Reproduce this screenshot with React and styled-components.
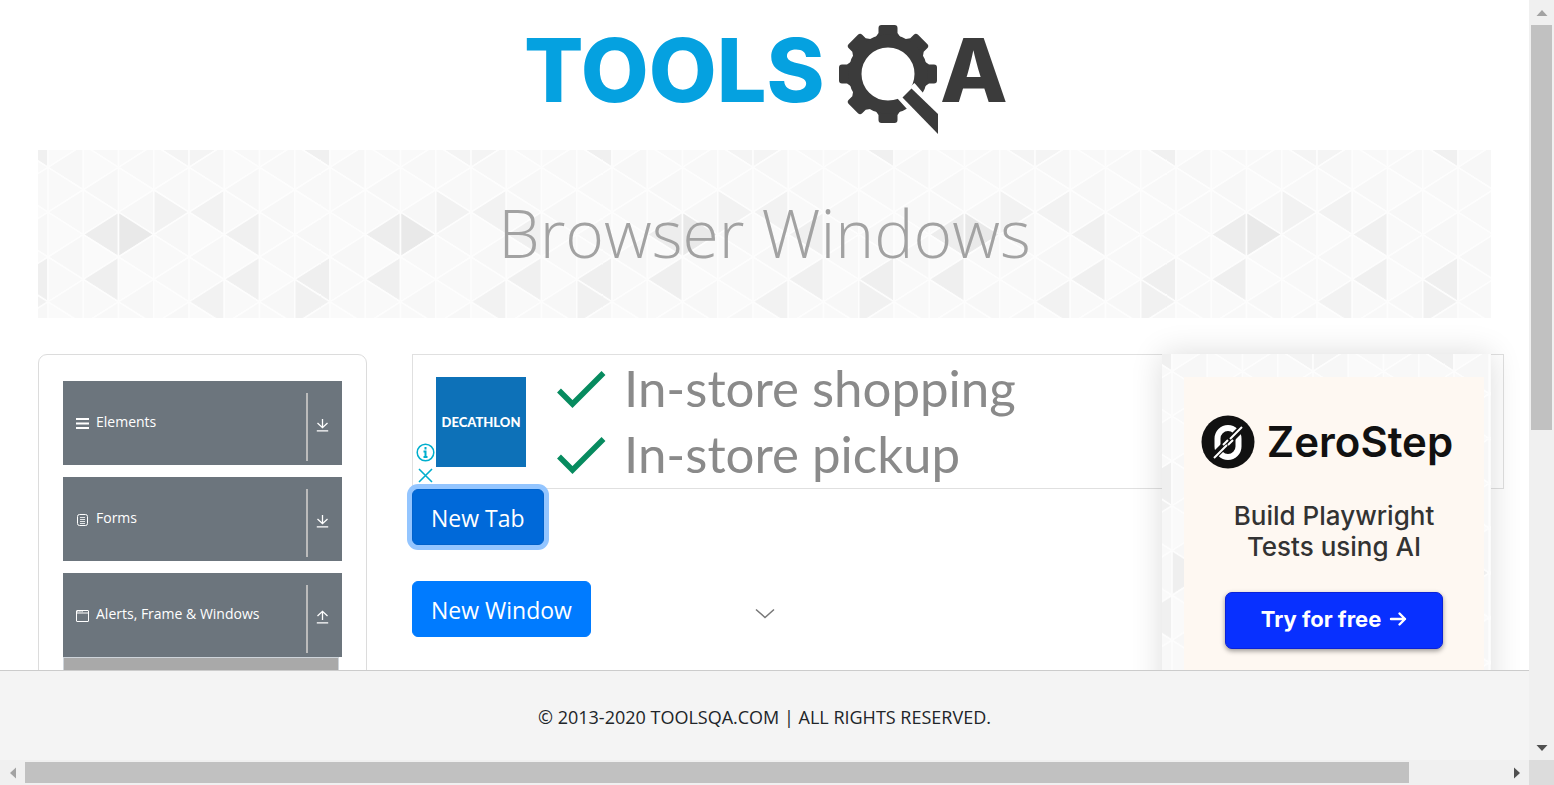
import React from "react";
import styled, { createGlobalStyle } from "styled-components";

const ui = '"Open Sans", "Noto Sans", sans-serif';

const GlobalStyle = createGlobalStyle`
  *, *::before, *::after { box-sizing: border-box; }
  body { margin: 0; background: #fff; color: #212529; font-family: ${ui}; }
  svg { display: block; }
`;

const Shell = styled.div`
  display: grid;
  grid-template-columns: minmax(0, 1fr) 25px;
  grid-template-rows: minmax(0, 1fr) 25px;
  height: 100vh;
`;
const Page = styled.div`
  display: flex;
  flex-direction: column;
  min-height: 0;
`;
const Scroller = styled.div`
  position: relative;
  flex: 1;
  min-height: 0;
  overflow: hidden;
  padding: 0 38px;
`;
const Header = styled.header`
  display: flex;
  justify-content: center;
  height: 150px;
`;
const Banner = styled.div`
  display: grid;
  height: 168px;
  margin-bottom: 36px;
  > * { grid-area: 1 / 1; }
`;
const Title = styled.h1`
  position: relative;
  align-self: center;
  margin: 0;
  padding-bottom: 4px;
  text-align: center;
  font-size: 66px;
  line-height: 84px;
  font-weight: 300;
  color: #a2a2a2;
`;
const Columns = styled.div`
  display: grid;
  grid-template-columns: minmax(0, 329fr) minmax(0, 705fr) minmax(0, 329fr);
  column-gap: 45px;
`;
const Accordion = styled.nav`
  display: flex;
  flex-direction: column;
  gap: 12px;
  height: 600px;
  padding: 26px 24px;
  border: 1px solid #dcdcdc;
  border-radius: 9px;
`;
const GroupButton = styled.button`
  display: flex;
  align-items: center;
  width: 100%;
  height: 84px;
  padding: 0 13px 0 12px;
  border: 0;
  background: #6c757d;
  color: #fff;
  font-family: ${ui};
  font-size: 14px;
  line-height: 20px;
  text-align: left;
`;
const GroupLabel = styled.span`
  flex: 1;
  padding: 0 0 2px 6px;
`;
const GroupToggle = styled.span`
  display: flex;
  align-items: center;
  height: 68px;
  margin-top: 8px;
  padding: 0 0 4px 8px;
  border-left: 2px solid #bbb;
`;
const SubList = styled.div`
  height: 200px;
  margin-right: 3px;
  border: 1px solid #ced4da;
  background: #a9a9a9;
`;
const Main = styled.main`
  min-width: 0;
`;
const AdFrame = styled.section`
  display: flex;
  width: 1092px;
  height: 135px;
  border: 1px solid #e0e0e0;
`;
const AdControls = styled.div`
  display: flex;
  flex-direction: column;
  justify-content: flex-end;
  align-items: center;
  gap: 6px;
  width: 23px;
  padding: 0 0 5px 2px;
`;
const IconButton = styled.button`
  padding: 0;
  border: 0;
  background: none;
`;
const Brand = styled.a`
  display: grid;
  place-items: center;
  width: 90px;
  height: 90px;
  margin-top: 22px;
  background: #0d71b8;
  color: #fff;
  font-family: Lato, sans-serif;
  font-size: 13px;
  font-weight: 900;
  text-decoration: none;
`;
const Perks = styled.ul`
  margin: 0;
  padding: 0 0 0 30px;
  list-style: none;
`;
const Perk = styled.li`
  display: flex;
  align-items: center;
  gap: 18px;
  height: 66px;
  color: #8a8a8a;
  font-family: Lato, sans-serif;
  font-size: 51px;
  line-height: 66px;
`;
const Actions = styled.div`
  display: flex;
  flex-direction: column;
  align-items: flex-start;
  gap: 36px;
`;
const ActionButton = styled.button`
  height: 56px;
  padding: 2px 18px 0;
  border: 1px solid ${(p) => (p.$focused ? "#0062cc" : "#007bff")};
  border-radius: 6px;
  background: ${(p) => (p.$focused ? "#0069d9" : "#007bff")};
  box-shadow: ${(p) => (p.$focused ? "0 0 0 5px #93c5ff" : "none")};
  color: #fff;
  font-family: ${ui};
  font-size: 23px;
  line-height: 36px;
`;
const Collapse = styled(IconButton)`
  position: absolute;
  left: 50%;
  bottom: 50px;
  transform: translateX(-50%);
`;
const SideAd = styled.aside`
  position: relative;
  display: grid;
  height: 420px;
  box-shadow: 0 0 30px rgba(0, 0, 0, 0.14);
  > * { grid-area: 1 / 1; }
`;
const Card = styled.div`
  position: relative;
  display: flex;
  flex-direction: column;
  align-items: center;
  width: 300px;
  margin: 23px 0 0 22px;
  padding-top: 38px;
  background: #fef8f2;
  font-family: Inter, sans-serif;
`;
const CardBrand = styled.div`
  display: flex;
  align-items: center;
  gap: 12px;
  padding-right: 14px;
  color: #111;
  font-size: 42px;
  font-weight: 600;
  line-height: 54px;
`;
const CardText = styled.p`
  margin: 31px 0 30px;
  color: #333;
  font-size: 26px;
  font-weight: 500;
  line-height: 31px;
  text-align: center;
`;
const CardButton = styled.button`
  display: flex;
  align-items: center;
  justify-content: center;
  gap: 8px;
  width: 218px;
  height: 57px;
  padding-bottom: 4px;
  border: 1px solid #0a22d8;
  border-radius: 7px;
  background: #0830ff;
  box-shadow: 0 2px 5px rgba(0, 0, 0, 0.4);
  color: #fff;
  font-family: Inter, sans-serif;
  font-size: 22px;
  font-weight: 700;
`;
const Footer = styled.footer`
  height: 90px;
  border-top: 1px solid #ccc;
  background: #f4f4f4;
  font-size: 18px;
  line-height: 92px;
  text-align: center;
`;
const Bar = styled.div`
  display: flex;
  flex-direction: ${(p) => (p.$vertical ? "column" : "row")};
  justify-content: space-between;
  background: #f0f0f0;
`;
const BarArrow = styled.span`
  display: grid;
  place-items: center;
  width: 25px;
  height: 25px;
`;
const Track = styled.div`
  flex: 1;
  padding: ${(p) => (p.$vertical ? "0 2px" : "2px 0")};
`;
const Thumb = styled.div`
  width: ${(p) => (p.$vertical ? "100%" : "93.6%")};
  height: ${(p) => (p.$vertical ? "57%" : "100%")};
  background: #c1c1c1;
`;
const Corner = styled.div`
  background: #dcdcdc;
`;

const COL = 35.25;
const STEP = 22.4;
const ACCENTS = {
  "7,-1": "#f0f0f0", "7,5": "#efefef", "7,6": "#f1f1f1",
  "1,3": "#ededed", "1,5": "#efefef", "2,3": "#e9e9e9",
  "3,2": "#f2f2f2", "3,-1": "#f4f4f4", "4,-1": "#f4f4f4",
  "4,2": "#f2f2f2", "4,6": "#f2f2f2", "5,3": "#f0f0f0", "5,5": "#f0f0f0",
  "0,9": "#efefef", "6,9": "#eeeeee",
};
const LEFT_TONES = ["#f7f7f7", "#f9f9f9", "#f8f8f8", "#f7f7f7"];
const RIGHT_TONES = ["#fbfbfb", "#f9f9f9", "#fcfcfc", "#fafafa"];

function Triangles({ id }) {
  const shapes = [];
  for (let c = -1; c <= 8; c++) {
    for (let j = -2; j <= 12; j++) {
      const k = (c + 8) % 8;
      const row = j > 10 ? j - 12 : j;
      const x1 = 10 + c * COL;
      const x2 = x1 + COL;
      const y = 17.3 + j * STEP;
      const apexLeft = (k + j + 16) % 2 === 0;
      const pts = apexLeft
        ? `${x1},${y} ${x2},${y - STEP} ${x2},${y + STEP}`
        : `${x2},${y} ${x1},${y - STEP} ${x1},${y + STEP}`;
      const tones = apexLeft ? LEFT_TONES : RIGHT_TONES;
      const tone = ACCENTS[`${k},${row}`] || tones[(k * 3 + row + 12) % 4];
      shapes.push(<polygon key={`${c},${j}`} points={pts} fill={tone} />);
    }
  }
  return (
    <svg width="100%" height="100%" aria-hidden="true">
      <defs>
        <pattern id={id} width="282" height="268.8" patternUnits="userSpaceOnUse">
          <g stroke="#fdfdfd" strokeWidth="1.6" strokeLinejoin="round">{shapes}</g>
        </pattern>
      </defs>
      <rect width="100%" height="100%" fill={`url(#${id})`} />
    </svg>
  );
}

const Logo = () => (
  <svg width="490" height="150" viewBox="520 0 490 150" role="img" aria-label="TOOLSQA">
    <text x="524" y="102" fill="#05a1e0" fontFamily="Inter, sans-serif" fontWeight="800" fontSize="88">TOOLS</text>
    <g fill="#3b3b3b">
      {[0, 45, 90, 180, 225, 270, 315].map((a) => (
        <path key={a} transform={`rotate(${a} 888 74)`} d="M875 38 L878.500 33 V28 Q878.500 25 881.500 25 H894.500 Q897.500 25 897.500 28 V33 L901 38 Z" />
      ))}
      <circle cx="888" cy="74" r="33" fill="none" stroke="#3b3b3b" strokeWidth="13" />
    </g>
    <polygon fill="#fff" points="914.5,83 924,94 940,105 940,136 920,125 907,109 897,98" />
    <polygon fill="#3b3b3b" points="911.5,88.500 938,114 938,134 902.500,97.500" />
    <text x="940" y="102" fill="#3b3b3b" fontFamily="Inter, sans-serif" fontWeight="800" fontSize="88">A</text>
  </svg>
);

const MenuIcon = () => (
  <svg width="15" height="15" viewBox="0 0 15 15" stroke="#fff" strokeWidth="2">
    <path d="M1 3H14M1 7.500H14M1 12H14" />
  </svg>
);
const FormIcon = () => (
  <svg width="15" height="15" viewBox="0 0 15 15" fill="none" stroke="#fff">
    <rect x="2.500" y="2.500" width="10" height="11" rx="2" />
    <path d="M5 5.500H10M5 7.500H10M5 9.500H10M5 11.500H10" strokeWidth=".8" />
  </svg>
);
const WindowIcon = () => (
  <svg width="15" height="15" viewBox="0 0 15 15" fill="none" stroke="#fff">
    <rect x="1.500" y="2.500" width="12" height="11" rx=".5" />
    <path d="M1.500 5H13.500" /><path d="M2 3.700H8" strokeWidth=".8" strokeDasharray="1.500 .7" />
  </svg>
);
const ArrowIcon = ({ up }) => (
  <svg width="13" height="14" viewBox="0 0 13 14" fill="none" stroke="#fff" strokeWidth="1.3">
    <path d={up ? "M6.500 10V1.500M1.500 6L6.500 1.300L11.500 6M.8 12.800H12.200" : "M6.500 1V9.500M1.500 5L6.500 9.700L11.500 5M.8 12.800H12.200"} />
  </svg>
);
const CheckIcon = () => (
  <svg width="50" height="40" viewBox="0 0 50 40" fill="none" stroke="#078b5f" strokeWidth="5.500">
    <path d="M3 22.500L16.500 36L47.500 5" />
  </svg>
);
const ZeroMark = () => (
  <svg width="54" height="54" viewBox="0 0 54 54">
    <circle cx="27" cy="27" r="26.500" fill="#111" />
    <rect x="16.500" y="13" width="21" height="29" rx="10.500" fill="none" stroke="#fff" strokeWidth="6" />
    <path d="M10 44L44 10" stroke="#111" strokeWidth="7" />
    <path d="M13 43L26 30M22 30L27 25M27 30L32 25M29 24L41 12" stroke="#fff" strokeWidth="2" />
  </svg>
);
const Tip = ({ dir, off }) => {
  const angle = { up: 0, right: 90, down: 180, left: 270 }[dir];
  return (
    <svg width="12" height="12" viewBox="0 0 12 12">
      <polygon points="0.500,9 6,3 11.500,9" fill={off ? "#a3a3a3" : "#505050"} transform={`rotate(${angle} 6 6)`} />
    </svg>
  );
};

const groups = [
  { label: "Elements", Icon: MenuIcon },
  { label: "Forms", Icon: FormIcon },
  { label: "Alerts, Frame & Windows", Icon: WindowIcon, open: true },
];

export default function App() {
  return (
    <>
      <GlobalStyle />
      <Shell>
        <Page>
          <Scroller>
            <Header><Logo /></Header>
            <Banner>
              <Triangles id="banner-tiles" />
              <Title>Browser Windows</Title>
            </Banner>
            <Columns>
              <Accordion>
                {groups.map(({ label, Icon, open }) => (
                  <div key={label}>
                    <GroupButton aria-expanded={!!open}>
                      <Icon />
                      <GroupLabel>{label}</GroupLabel>
                      <GroupToggle><ArrowIcon up={open} /></GroupToggle>
                    </GroupButton>
                    {open && <SubList />}
                  </div>
                ))}
              </Accordion>
              <Main>
                <AdFrame>
                  <AdControls>
                    <IconButton aria-label="Ad information">
                      <svg width="19" height="19" viewBox="0 0 19 19" fill="none" stroke="#00aecd">
                        <circle cx="9.500" cy="9.500" r="8.300" strokeWidth="1.500" />
                        <path d="M9.500 4V6.500M7.500 8.500H9.500V14M7.500 14H11.500" strokeWidth="2" />
                      </svg>
                    </IconButton>
                    <IconButton aria-label="Close ad">
                      <svg width="15" height="15" viewBox="0 0 15 15" stroke="#00aecd" strokeWidth="1.600">
                        <path d="M1 1L14 14M14 1L1 14" />
                      </svg>
                    </IconButton>
                  </AdControls>
                  <Brand href="#">DECATHLON</Brand>
                  <Perks>
                    <Perk><CheckIcon />In-store shopping</Perk>
                    <Perk><CheckIcon />In-store pickup</Perk>
                  </Perks>
                </AdFrame>
                <Actions>
                  <ActionButton $focused>New Tab</ActionButton>
                  <ActionButton>New Window</ActionButton>
                </Actions>
              </Main>
              <SideAd>
                <Triangles id="side-tiles" />
                <Card>
                  <CardBrand><ZeroMark />ZeroStep</CardBrand>
                  <CardText>Build Playwright<br />Tests using AI</CardText>
                  <CardButton>
                    Try for free
                    <svg width="18" height="16" viewBox="0 0 18 16" fill="none" stroke="#fff" strokeWidth="2.400" strokeLinecap="round" strokeLinejoin="round">
                      <path d="M2 8H16M10.500 2.500L16 8L10.500 13.500" />
                    </svg>
                  </CardButton>
                </Card>
              </SideAd>
            </Columns>
            <Collapse aria-label="Collapse ad">
              <svg width="20" height="12" viewBox="0 0 20 12" fill="none" stroke="#777" strokeWidth="1.500">
                <path d="M1 1.500L10 9.500L19 1.500" />
              </svg>
            </Collapse>
          </Scroller>
          <Footer>© 2013-2020 TOOLSQA.COM | ALL RIGHTS RESERVED.</Footer>
        </Page>
        <Bar $vertical>
          <BarArrow><Tip dir="up" off /></BarArrow>
          <Track $vertical><Thumb $vertical /></Track>
          <BarArrow><Tip dir="down" /></BarArrow>
        </Bar>
        <Bar>
          <BarArrow><Tip dir="left" off /></BarArrow>
          <Track><Thumb /></Track>
          <BarArrow><Tip dir="right" /></BarArrow>
        </Bar>
        <Corner />
      </Shell>
    </>
  );
}
